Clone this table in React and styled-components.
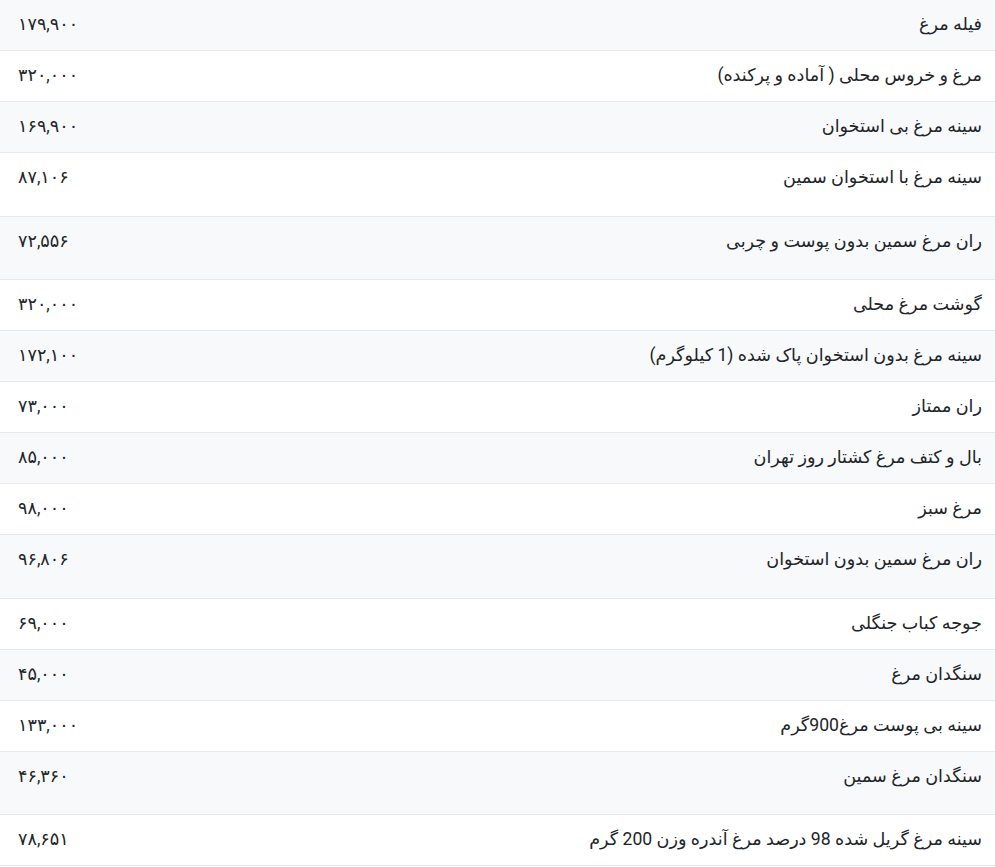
import React from "react";
import styled, { createGlobalStyle } from "styled-components";

const GlobalStyle = createGlobalStyle`
  body {
    margin: 0;
    background: #fff;
    font-family: Roboto, "DejaVu Sans", sans-serif;
    color: #212529;
  }
`;

const Table = styled.table`
  width: 100%;
  border-collapse: collapse;
  direction: rtl;
  font-size: 17.6px;
  line-height: 26px;
`;

const Row = styled.tr`
  background: ${props => (props.striped ? "#f8f9fa" : "#fff")};
  border-bottom: 1px solid #e6e8eb;
`;

const NameCell = styled.td`
  text-align: right;
  vertical-align: top;
  padding: 11px 13px ${props => (props.tall ? "25.5px" : "13px")} 12px;
`;

const PriceCell = styled.td`
  text-align: left;
  vertical-align: top;
  white-space: nowrap;
  width: 1%;
  padding: 11px 18px 13px 18px;
`;

const prices = [
  { name: "فیله مرغ", price: "۱۷۹,۹۰۰" },
  { name: "مرغ و خروس محلی ( آماده و پرکنده)", price: "۳۲۰,۰۰۰" },
  { name: "سینه مرغ بی استخوان", price: "۱۶۹,۹۰۰" },
  { name: "سینه مرغ با استخوان سمین", price: "۸۷,۱۰۶", tall: true },
  { name: "ران مرغ سمین بدون پوست و چربی", price: "۷۲,۵۵۶", tall: true },
  { name: "گوشت مرغ محلی", price: "۳۲۰,۰۰۰" },
  { name: "سینه مرغ بدون استخوان پاک شده (1 کیلوگرم)", price: "۱۷۲,۱۰۰" },
  { name: "ران ممتاز", price: "۷۳,۰۰۰" },
  { name: "بال و کتف مرغ کشتار روز تهران", price: "۸۵,۰۰۰" },
  { name: "مرغ سبز", price: "۹۸,۰۰۰" },
  { name: "ران مرغ سمین بدون استخوان", price: "۹۶,۸۰۶", tall: true },
  { name: "جوجه کباب جنگلی", price: "۶۹,۰۰۰" },
  { name: "سنگدان مرغ", price: "۴۵,۰۰۰" },
  { name: "سینه بی پوست مرغ900گرم", price: "۱۳۳,۰۰۰" },
  { name: "سنگدان مرغ سمین", price: "۴۶,۳۶۰", tall: true },
  { name: "سینه مرغ گریل شده 98 درصد مرغ آندره وزن 200 گرم", price: "۷۸,۶۵۱" }
];

const App = () => {
  return (
    <>
      <GlobalStyle />
      <Table>
        <tbody>
          {prices.map((item, idx) => (
            <Row key={idx} striped={idx % 2 === 0}>
              <NameCell tall={item.tall}>{item.name}</NameCell>
              <PriceCell>{item.price}</PriceCell>
            </Row>
          ))}
        </tbody>
      </Table>
    </>
  );
};

export default App;
